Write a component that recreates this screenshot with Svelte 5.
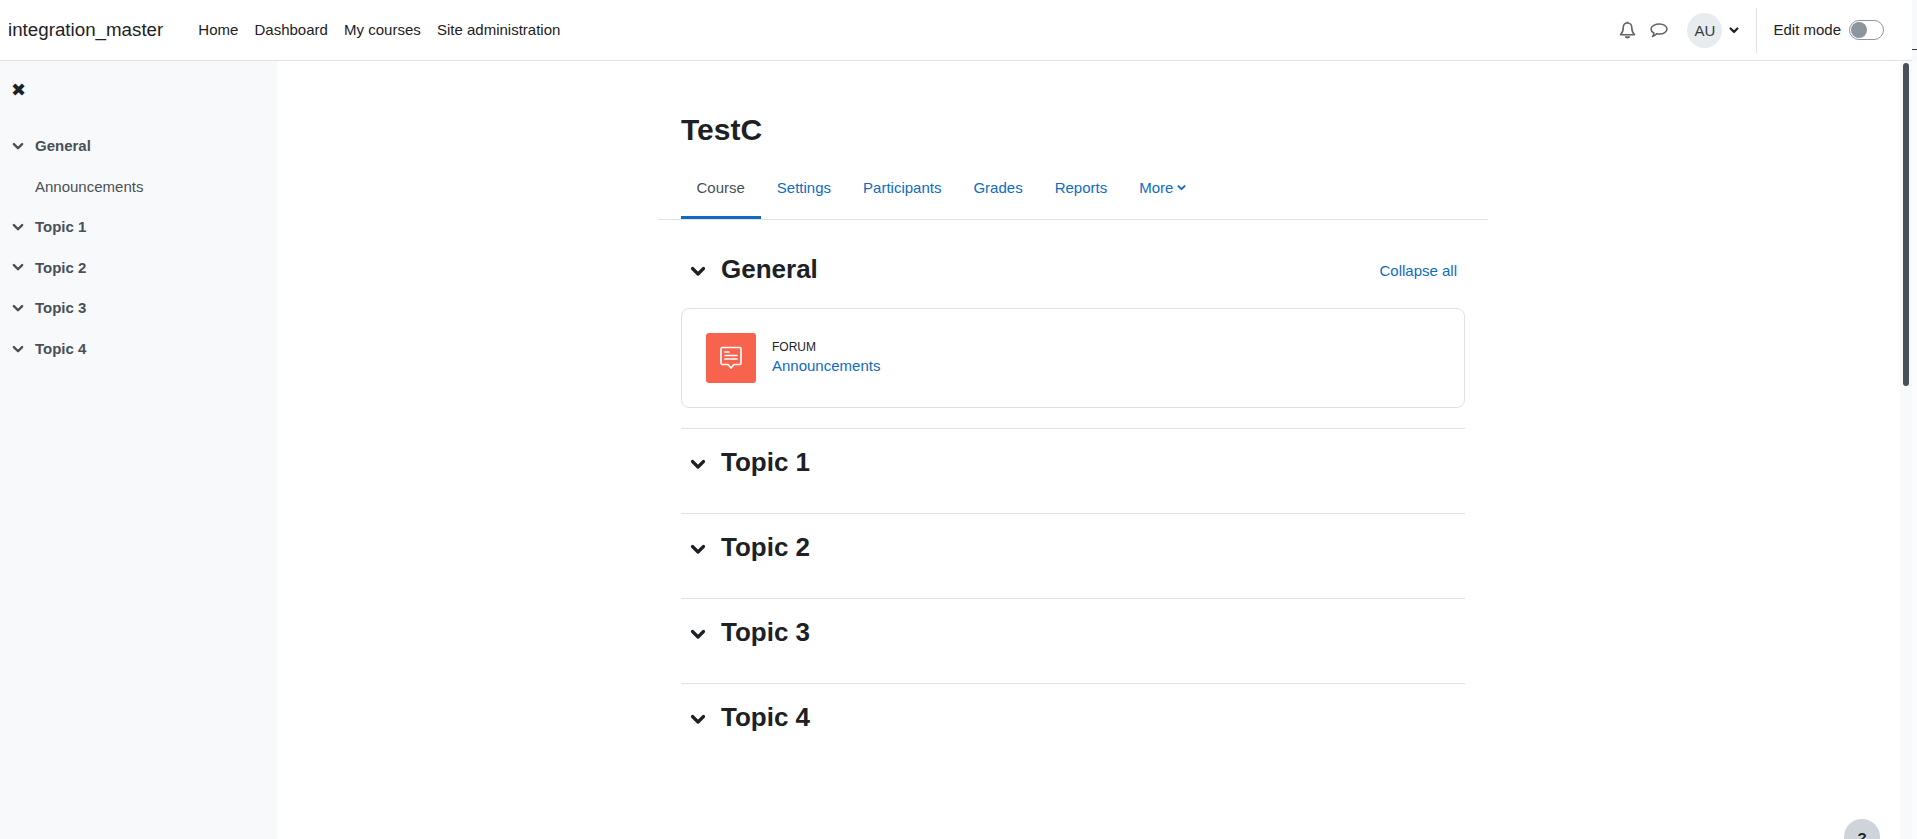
<script lang="ts">
	const navItems = ['Home', 'Dashboard', 'My courses', 'Site administration'];
	const tabs = ['Settings', 'Participants', 'Grades', 'Reports'];
	const topics = ['Topic 1', 'Topic 2', 'Topic 3', 'Topic 4'];
</script>

{#snippet chevron(size: number, width: number)}
	<svg class="chevron" width={size} height={size} viewBox="0 0 16 16" fill="none" stroke="currentColor" stroke-width={width} stroke-linecap="round" stroke-linejoin="round">
		<path d="M2.5 5.5 8 11l5.5-5.5" />
	</svg>
{/snippet}

<div class="page">
	<header class="navbar">
		<span class="brand">integration_master</span>
		<nav class="primary">
			{#each navItems as item}
				<span>{item}</span>
			{/each}
		</nav>
		<div class="usernav">
			<svg class="bell" width="17" height="18" viewBox="0 0 17 18" fill="none" stroke="#5f656b" stroke-width="1.6" stroke-linejoin="round">
				<path d="M8.5 2C5.7 2 4.2 4 4.2 6.8c0 3.6-1 5.3-2.7 7h14c-1.7-1.7-2.7-3.4-2.7-7C12.800 4 11.300 2 8.500 2z" />
				<path d="M6.500 15.400c.5 1.300 3.500 1.300 4 0" stroke-width="2" />
				<path d="M8.500 .6v1.400" />
			</svg>
			<svg class="comment" width="18" height="15" viewBox="0 0 18 15" fill="none" stroke="#5f656b" stroke-width="1.6" stroke-linejoin="round">
				<path d="M9.500 1c4 0 7.500 2 7.500 5s-3.500 5-7.500 5c-1 0-1.800-.1-2.600-.3-1.100 1-2.600 2.200-4.400 2.800.8-.9 1.300-2 1.400-3.300C2.200 9.100 1 7.700 1 6c0-3 4.500-5 8.500-5z" />
			</svg>
			<span class="avatar">AU</span>
			<span class="caret">{@render chevron(10, 3.4)}</span>
			<span class="divider"></span>
			<span class="edit-label">Edit mode</span>
			<span class="toggle"><span class="knob"></span></span>
		</div>
		<span class="corner"><span class="corner-line"></span></span>
	</header>

	<div class="body">
		<aside class="drawer">
			<div class="close">✖</div>
			<ul class="index">
				<li class="section-row">{@render chevron(12, 3.2)}General</li>
				<li class="activity">Announcements</li>
				{#each topics as topic}
					<li class="section-row">{@render chevron(12, 3.2)}{topic}</li>
				{/each}
			</ul>
		</aside>

		<main class="main">
			<div class="column">
				<h1>TestC</h1>
				<nav class="tabs">
					<span class="tab active">Course</span>
					{#each tabs as tab}
						<span class="tab">{tab}</span>
					{/each}
					<span class="tab more">More {@render chevron(9, 3.4)}</span>
				</nav>

				<div class="course">
					<section class="section first">
						<div class="section-head">
							<span class="section-chevron">{@render chevron(16, 3.2)}</span>
							<h2>General</h2>
							<span class="collapse">Collapse all</span>
						</div>
						<div class="card">
							<div class="forum-icon">
								<svg width="24" height="24" viewBox="0 0 24 24" fill="none" stroke="#fff" stroke-width="1.7" stroke-linejoin="round" stroke-linecap="round">
									<path d="M3.500 1.500h17a1.500 1.500 0 0 1 1.500 1.500v14a1.500 1.500 0 0 1-1.500 1.500h-5.500L12 22l-3-3.500H3.500A1.500 1.500 0 0 1 2 17V3a1.500 1.500 0 0 1 1.500-1.500z" />
									<path d="M6 6h4M6 9.500h12M6 13h12" />
								</svg>
							</div>
							<div class="activity-text">
								<span class="type">FORUM</span>
								<span class="link">Announcements</span>
							</div>
						</div>
					</section>
					{#each topics as topic}
						<section class="section">
							<div class="section-head">
								<span class="section-chevron">{@render chevron(16, 3.2)}</span>
								<h2>{topic}</h2>
							</div>
						</section>
					{/each}
				</div>
			</div>
			<button class="help">?</button>
		</main>

		<div class="scrollbar"><div class="thumb"></div></div>
		<div class="gutter"></div>
	</div>
</div>

<style>
	:global(body) {
		margin: 0;
		background: #fff;
		overflow: hidden;
	}

	.page {
		height: 839px;
		display: flex;
		flex-direction: column;
		overflow: hidden;
		font-family: 'Liberation Sans', Arial, sans-serif;
		font-size: 15px;
		color: #1d2125;
	}

	.navbar {
		height: 60px;
		flex: none;
		display: flex;
		align-items: center;
		border-bottom: 1px solid #dee2e6;
		padding-left: 8px;
		position: relative;
	}

	.brand {
		font-size: 18.75px;
		margin-right: 35px;
	}

	.primary {
		display: flex;
		gap: 16.2px;
		margin-top: -1px;
	}

	.usernav {
		margin-left: auto;
		display: flex;
		align-items: center;
		height: 46px;
		padding-right: 33px;
	}

	.bell {
		margin-right: 14px;
	}

	.comment {
		margin-right: 19px;
	}

	.avatar {
		width: 35px;
		height: 35px;
		border-radius: 50%;
		background: #e9ecef;
		display: flex;
		align-items: center;
		justify-content: center;
		color: #343a40;
	}

	.caret {
		display: flex;
		margin-left: 7px;
		margin-right: 17px;
	}

	.divider {
		width: 1px;
		height: 45px;
		background: #dee2e6;
		margin-right: 16px;
	}

	.edit-label {
		margin-right: 8px;
		margin-top: -1px;
	}

	.toggle {
		width: 33px;
		height: 18px;
		border: 1px solid #8f959e;
		border-radius: 10px;
		display: flex;
		align-items: center;
		background: #fff;
	}

	.knob {
		width: 16px;
		height: 16px;
		border-radius: 50%;
		background: #8f959e;
		margin-left: 1px;
	}

	.corner {
		position: absolute;
		right: 0;
		top: 0;
		width: 5px;
		height: 61px;
		background: #f8f9fa;
	}

	.corner-line {
		display: block;
		height: 1px;
		margin-top: 49px;
		background: #343a40;
	}

	.body {
		flex: 1;
		min-height: 0;
		display: flex;
	}

	.drawer {
		width: 277px;
		flex: none;
		background: #f8f9fa;
	}

	.close {
		font-family: 'DejaVu Sans', sans-serif;
		font-size: 18px;
		line-height: 24px;
		padding: 17px 0 0 11px;
		height: 47.5px;
		color: #1d2125;
	}

	.index {
		list-style: none;
		margin: 0;
		padding: 0 0 0 12px;
		color: #495057;
		font-size: 15px;
	}

	.index li {
		display: flex;
		align-items: center;
		height: 40.55px;
	}

	.section-row {
		font-weight: 700;
	}

	.section-row :global(.chevron) {
		margin-right: 11px;
	}

	.activity {
		padding-left: 23px;
	}

	.main {
		flex: 1;
		min-width: 0;
		position: relative;
		display: flex;
		justify-content: center;
	}

	.column {
		width: 830px;
		margin-right: 31px;
	}

	h1 {
		font-size: 30px;
		line-height: 36px;
		font-weight: 700;
		margin: 0;
		padding: 51px 0 0 23px;
	}

	.tabs {
		display: flex;
		align-items: flex-start;
		height: 62px;
		margin-top: 9px;
		padding-left: 22.5px;
		border-bottom: 1px solid #dee2e6;
		color: #0f6cbf;
	}

	.tab {
		padding: 0 16px 2px;
		height: 62px;
		display: flex;
		align-items: center;
		gap: 4px;
		box-sizing: border-box;
	}

	.tab.active {
		color: #495057;
		border-bottom: 3px solid #0f6cbf;
		padding-top: 1px;
		padding-bottom: 0;
	}

	.course {
		padding: 0 23px;
		width: 784px;
	}

	.section {
		border-top: 1px solid #dee2e6;
		height: 85px;
		box-sizing: border-box;
	}

	.section.first {
		border-top: 0;
		height: auto;
		padding-bottom: 20px;
	}

	.section-head {
		display: flex;
		align-items: center;
		height: 66px;
		padding-left: 9px;
	}

	.section.first .section-head {
		height: 88px;
		box-sizing: border-box;
		padding-top: 9px;
	}

	.section-chevron {
		display: flex;
		margin-right: 15px;
		margin-top: 4px;
		color: #1d2125;
	}

	h2 {
		font-size: 26px;
		font-weight: 700;
		margin: 0;
		line-height: 32px;
	}

	.collapse {
		margin-left: auto;
		margin-right: 8px;
		margin-top: 3px;
		color: #0f6cbf;
	}

	.card {
		border: 1px solid #dee2e6;
		border-radius: 8px;
		height: 100px;
		box-sizing: border-box;
		display: flex;
		align-items: center;
		padding-left: 24px;
	}

	.forum-icon {
		width: 50px;
		height: 50px;
		border-radius: 3px;
		background: #f7634d;
		display: flex;
		align-items: center;
		justify-content: center;
		margin-right: 16px;
	}

	.activity-text {
		display: flex;
		flex-direction: column;
		gap: 2px;
		margin-bottom: 3px;
	}

	.type {
		font-size: 12px;
		line-height: 16px;
	}

	.link {
		color: #0f6cbf;
	}

	.help {
		position: absolute;
		right: 20px;
		top: 758px;
		width: 36px;
		height: 36px;
		border-radius: 50%;
		border: 0;
		padding: 0;
		background: #ced4da;
		font: 700 15px 'Liberation Sans', Arial, sans-serif;
		color: #1d2125;
	}

	.scrollbar {
		width: 12px;
		flex: none;
		background: #f8f9fa;
		padding-top: 2px;
		box-sizing: border-box;
	}

	.thumb {
		width: 6px;
		height: 323px;
		margin-left: 3px;
		border-radius: 3px;
		background: #495057;
	}

	.gutter {
		width: 5px;
		flex: none;
		background: #fcfcfd;
	}
</style>
